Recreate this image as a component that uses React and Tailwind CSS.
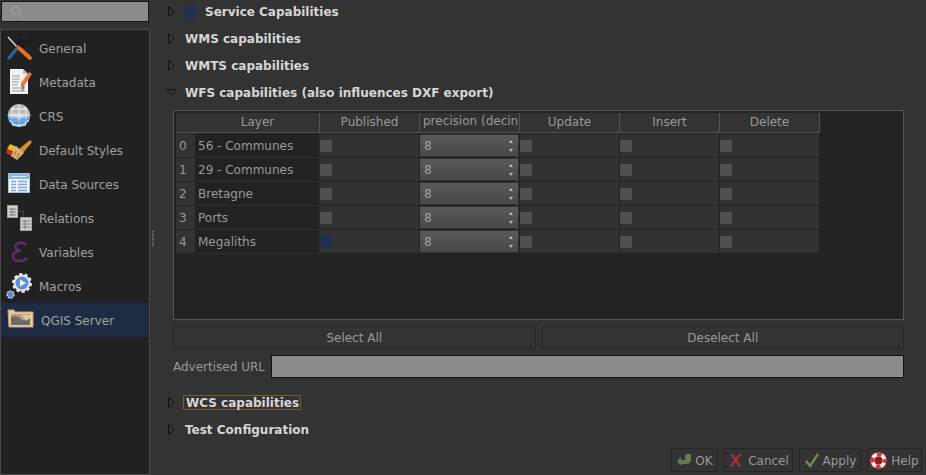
const font = { fontFamily: '"DejaVu Sans", sans-serif' };

function GeneralIcon() {
  return (
    <svg width="32" height="28" viewBox="0 0 32 28">
      <path d="M4 3 L15 15" stroke="#d8d8d8" strokeWidth="1.5" />
      <path d="M5 24 L15 12" stroke="#2f5f96" strokeWidth="3.5" strokeLinecap="round" />
      <path d="M15 14 L26 24" stroke="#e8701a" strokeWidth="4" strokeLinecap="round" />
      <path d="M11 8 L17 2 L23 3 L27 8 L27 13 L23 9 L18 14 Z" fill="#1b1b1b" />
      <path d="M17 3 L23 4" stroke="#3d3d3d" />
    </svg>
  );
}

function MetadataIcon() {
  return (
    <svg width="32" height="28" viewBox="0 0 32 28">
      <path d="M6 1 H19 L24 6 V26 H6 Z" fill="#f3f3f3" />
      <path d="M19 1 V6 H24 Z" fill="#bcbcbc" />
      <path d="M8 8 H16 M8 11 H16 M8 14 H15 M8 17 H14 M8 20 H21 M8 23 H21" stroke="#9a9a9a" strokeWidth="1" />
      <path d="M17 15 L25 4 L28 6 L20 18 L17 20 Z" fill="#e57a33" />
      <path d="M20 18 L18 23" stroke="#777" strokeWidth="1.5" />
    </svg>
  );
}

function CrsIcon() {
  return (
    <svg width="32" height="28" viewBox="0 0 32 28">
      <circle cx="15" cy="14" r="11" fill="#7fb4e6" />
      <path d="M4 13 A11 11 0 0 1 26 13 Z" fill="#b9b9b9" />
      <path d="M15 3 V25 M9 5 Q6 14 9 23 M21 5 Q24 14 21 23 M7 7 H23 M5 19 H25 M8 23 H22" stroke="#eef4fa" strokeWidth="1" fill="none" />
      <path d="M2 13 L15 11 L28 13 L15 16 Z" fill="#e0e0e0" />
      <path d="M5 16 A11 11 0 0 0 25 16 L15 18 Z" fill="#3f86cf" opacity="0.55" />
    </svg>
  );
}

function StylesIcon() {
  return (
    <svg width="32" height="28" viewBox="0 0 32 28">
      <path d="M15 13 L26 4 L28 6 L19 17 Z" fill="#c99334" />
      <path d="M6 8 L13 11 L10 16 L3 13 Z" fill="#d8c22c" />
      <path d="M3 13 L10 16 L9 21 L2 17 Z" fill="#c42c2c" />
      <path d="M12 10 L20 17 L13 24 L7 20 Z" fill="#dcb26e" />
      <path d="M12 15 L10 20 M15 17 L13 22" stroke="#9a7437" strokeWidth="1" />
    </svg>
  );
}

function SourcesIcon() {
  return (
    <svg width="32" height="28" viewBox="0 0 32 28">
      <rect x="4.5" y="3.5" width="21" height="19" fill="#f0f5fb" stroke="#a5c0dc" />
      <rect x="5" y="4" width="20" height="5" fill="#8ab8e4" />
      <path d="M8 6.5 H22" stroke="#dce9f6" />
      <path d="M7 11.5 H12 M14 11.5 H23 M7 14.5 H12 M14 14.5 H23 M7 17.5 H12 M14 17.5 H23 M7 20.5 H12 M14 20.5 H23" stroke="#78a8d8" strokeWidth="1.4" />
    </svg>
  );
}

function RelationsIcon() {
  const table = (x, y, w, h) => (
    <g>
      <rect x={x + 0.5} y={y + 0.5} width={w - 1} height={h - 1} fill="#cfcfcf" stroke="#a0a0a0" />
      <path d={`M${x + 2} ${y + 4} H${x + w - 2} M${x + 2} ${y + 7} H${x + w - 2} M${x + 2} ${y + 10} H${x + w - 2} M${x + 5} ${y + 3} V${y + h - 2}`} stroke="#7c7c7c" strokeWidth="1" />
    </g>
  );
  return (
    <svg width="32" height="28" viewBox="0 0 32 28">
      <path d="M14 7.5 H19.5 V13" stroke="#33465c" fill="none" />
      {table(3, 1, 11, 13)}
      {table(16, 13, 12, 14)}
    </svg>
  );
}

function VariablesIcon() {
  return (
    <svg width="32" height="28" viewBox="0 0 32 28">
      <path d="M22 7 Q20 4 15 5 Q10 6 12 10 Q13 13 17 13 Q9 13 9 18 Q9 23 15 23 Q20 23 23 20" stroke="#5b2d6e" strokeWidth="2.6" fill="none" />
    </svg>
  );
}

function MacrosIcon() {
  return (
    <svg width="32" height="28" viewBox="0 0 32 28">
      <circle cx="18" cy="11" r="8.5" fill="#e6e6e6" stroke="#e6e6e6" strokeWidth="3" strokeDasharray="3 2.3" />
      <circle cx="18" cy="11" r="6.5" fill="#5b92d2" />
      <path d="M16 7.5 L22 11 L16 14.5 Z" fill="#f2f2f2" />
      <circle cx="6.5" cy="22.5" r="3.5" fill="#4f8cd0" stroke="#d5d5d5" strokeWidth="1.5" strokeDasharray="2 1" />
    </svg>
  );
}

function ServerIcon() {
  return (
    <svg width="32" height="24" viewBox="0 0 32 24">
      <path d="M3 2 H9 L10 4 H28 V19 H4 Z" fill="#e8c9a0" stroke="#c9a374" />
      <rect x="6" y="6" width="19" height="11" fill="#b9a083" />
      <path d="M6 9 Q12 7 15 10 Q19 15 25 9 V17 H6 Z" fill="#6e6a66" />
      <path d="M17 7 H25 V10 L21 13 Z" fill="#d9c6ac" />
    </svg>
  );
}

const navItems = [
  ["General", GeneralIcon],
  ["Metadata", MetadataIcon],
  ["CRS", CrsIcon],
  ["Default Styles", StylesIcon],
  ["Data Sources", SourcesIcon],
  ["Relations", RelationsIcon],
  ["Variables", VariablesIcon],
  ["Macros", MacrosIcon],
];

function Sidebar() {
  return (
    <aside className="flex w-[150px] shrink-0 flex-col">
      <div className="mx-px mt-px flex h-[21px] items-center border border-[#161616] bg-[#8b8b8b] pl-2">
        <svg width="14" height="14" viewBox="0 0 14 14" fill="none" stroke="#9c9c9c" strokeWidth="1.5">
          <circle cx="5.5" cy="5.5" r="4" />
          <path d="M8.5 8.5 L13 13" />
        </svg>
      </div>
      <div className="mt-[7px] flex-1 border border-[#4a4a4a] bg-[#212121] pt-px">
        {navItems.map(([label, Icon]) => (
          <div key={label} className="flex h-[34px] items-center text-[12px] text-[#a0a0a0]">
            <span className="flex w-[36px] shrink-0 pl-[3px]">
              <Icon />
            </span>
            <span className="ml-[2px] pt-px">{label}</span>
          </div>
        ))}
        <div className="flex h-[34px] items-center bg-[#1e2b42] text-[12px] text-[#a0a0a0]">
          <span className="flex w-[38px] shrink-0 pl-[4px]">
            <ServerIcon />
          </span>
          <span className="ml-[2px] pt-px">QGIS Server</span>
        </div>
      </div>
    </aside>
  );
}

function Splitter() {
  return (
    <div className="flex w-[6px] shrink-0 items-center justify-center pt-[2px]">
      <div className="h-[15px] w-[2px] bg-[repeating-linear-gradient(to_bottom,#777_0,#777_1px,transparent_1px,transparent_2px)]" />
    </div>
  );
}

function Arrow({ open }) {
  return (
    <svg width="11" height="11" viewBox="0 0 11 11" fill="none" stroke="#111" strokeWidth="1" className="shrink-0">
      {open ? <path d="M0.5 2.5 H10.5 L5.5 8 Z" /> : <path d="M2.5 0.5 V10.5 L8.5 5.5 Z" />}
    </svg>
  );
}

function GroupHeader({ title, open, check, focus }) {
  return (
    <div className="flex h-[27px] items-center pl-[10px] text-[12px] font-bold text-[#d6d6d6]">
      <Arrow open={open} />
      {check && <span className="ml-[7px] mr-[9px] h-3 w-3 bg-[#1f3050]" />}
      <span
        className={
          focus
            ? "ml-[6px] border border-[#7a5a30] pl-[2px] pr-[1px] pt-px leading-[12px]"
            : check
              ? ""
              : "ml-[8px]"
        }
      >
        {title}
      </span>
    </div>
  );
}

function Check({ on }) {
  return <span className={on ? "h-3 w-3 bg-[#1f3050]" : "h-3 w-3 bg-[#505050]"} />;
}

function Spin() {
  return (
    <div className="flex h-[21px] w-[98px] items-center justify-between bg-[linear-gradient(to_bottom,#5a5a5a,#484848)] pl-[4px] pr-[5px] text-[12px] text-[#a0a0a0]">
      <span>8</span>
      <span className="flex flex-col gap-[6px]">
        <svg width="4" height="3" viewBox="0 0 4 3"><path d="M0 3 L2 0 L4 3 Z" fill="#bdbdbd" /></svg>
        <svg width="4" height="3" viewBox="0 0 4 3"><path d="M0 0 L2 3 L4 0 Z" fill="#bdbdbd" /></svg>
      </span>
    </div>
  );
}

const columns = ["Published", "precision (decin", "Update", "Insert", "Delete"];
const layers = ["56 - Communes", "29 - Communes", "Bretagne", "Ports", "Megaliths"];

function LayerTable() {
  return (
    <div className="ml-[17px] mr-[22px] h-[210px] border border-[#555] bg-[#232323] pl-[2px] pt-[2px] text-[12px] text-[#999]">
      <div className="flex h-[20px]">
        <div className="w-[20px] border-b border-[#555] bg-[#333]" />
        <div className="flex w-[124px] items-center justify-center border-b border-r border-[#555] bg-[#333] pb-px">Layer</div>
        {columns.map((c) => (
          <div
            key={c}
            className={
              c.startsWith("precision")
                ? "w-[100px] overflow-hidden whitespace-nowrap border-b border-r border-[#555] bg-[#333] pl-[3px] leading-[17px]"
                : "flex w-[100px] items-center justify-center border-b border-r border-[#555] bg-[#333] pb-px"
            }
          >
            {c}
          </div>
        ))}
      </div>
      <div className="mt-px">
        {layers.map((name, i) => (
          <div key={name} className="flex h-[24px]">
            <div className="flex w-[20px] items-center border-b border-r border-[#232323] bg-[#333] pl-[3px]">{i}</div>
            <div className="flex w-[124px] items-center border-b border-r border-[#2e2e2e] bg-[#222] pl-[2px]">{name}</div>
            <div className="flex w-[100px] items-center border-b border-r border-[#222] bg-[#323232]">
              <Check on={name === "Megaliths"} />
            </div>
            <div className="flex w-[100px] items-center border-b border-r border-[#222] bg-[#323232]">
              <Spin />
            </div>
            <div className="flex w-[100px] items-center border-b border-r border-[#222] bg-[#323232]"><Check /></div>
            <div className="flex w-[100px] items-center border-b border-r border-[#222] bg-[#323232]"><Check /></div>
            <div className="flex w-[100px] items-center border-b border-r border-[#222] bg-[#323232]"><Check /></div>
          </div>
        ))}
      </div>
    </div>
  );
}

function DialogButton({ label, icon, className }) {
  return (
    <div className={"flex h-[24px] items-center justify-center border border-[#262626] bg-[#333] text-[12px] text-[#999] " + className}>
      {icon}
      <span className="pt-px">{label}</span>
    </div>
  );
}

function Footer() {
  return (
    <div className="mt-auto flex justify-end gap-[6px] pb-[3px] pr-[4px]">
      <DialogButton
        label="OK"
        className="w-[47px] gap-[3px]"
        icon={
          <svg width="16" height="16" viewBox="0 0 16 16">
            <path d="M1 9 L5 5 V8 H9 V4 Q9 2 11 2 H15 V7 Q15 12 10 12 H5 V14 Z" fill="#5f7d4c" />
          </svg>
        }
      />
      <DialogButton
        label="Cancel"
        className="w-[69px] gap-[4px]"
        icon={
          <svg width="16" height="16" viewBox="0 0 16 16" fill="none" stroke="#a62f3b" strokeWidth="2.4">
            <path d="M4 2 L12 14.5 M12.5 2 Q8 7 3 14.5" />
          </svg>
        }
      />
      <DialogButton
        label="Apply"
        className="w-[62px] gap-[3px]"
        icon={
          <svg width="16" height="16" viewBox="0 0 16 16" fill="none" stroke="#6b8f4e" strokeWidth="2.4">
            <path d="M2 9 L6 14 L14 2" />
          </svg>
        }
      />
      <DialogButton
        label="Help"
        className="w-[55px] gap-[4px]"
        icon={
          <svg width="17" height="17" viewBox="0 0 17 17">
            <rect x="1" y="1" width="15" height="15" fill="#8a1f22" />
            <circle cx="8.5" cy="8.5" r="6" fill="none" stroke="#f0f0f0" strokeWidth="4" />
            <circle cx="8.5" cy="8.5" r="6" fill="none" stroke="#d8343a" strokeWidth="4" strokeDasharray="4.7 4.7" strokeDashoffset="2.3" />
          </svg>
        }
      />
    </div>
  );
}

export default function App() {
  return (
    <div style={font} className="flex h-[475px] w-[926px] overflow-hidden bg-[#333]">
      <Sidebar />
      <Splitter />
      <main className="flex min-w-0 flex-1 flex-col">
        <div className="-mt-[2px]">
          <GroupHeader title="Service Capabilities" check />
          <GroupHeader title="WMS capabilities" />
          <GroupHeader title="WMTS capabilities" />
          <GroupHeader title="WFS capabilities (also influences DXF export)" open />
        </div>
        <div className="mt-[4px]">
          <LayerTable />
        </div>
        <div className="ml-[17px] mr-[22px] mt-[6px] flex gap-[6px]">
          <div className="flex h-[23px] flex-1 items-center justify-center border border-[#262626] bg-[#333] text-[12px] text-[#999]">Select All</div>
          <div className="flex h-[23px] flex-1 items-center justify-center border border-[#262626] bg-[#333] text-[12px] text-[#999]">Deselect All</div>
        </div>
        <div className="ml-[17px] mr-[22px] mt-[6px] flex items-center gap-[6px]">
          <span className="text-[12px] text-[#999]">Advertised URL</span>
          <div className="h-[23px] flex-1 border border-[#111] bg-[#8b8b8b]" />
        </div>
        <div className="mt-[11px]">
          <GroupHeader title="WCS capabilities" focus />
          <GroupHeader title="Test Configuration" />
        </div>
        <Footer />
      </main>
    </div>
  );
}
